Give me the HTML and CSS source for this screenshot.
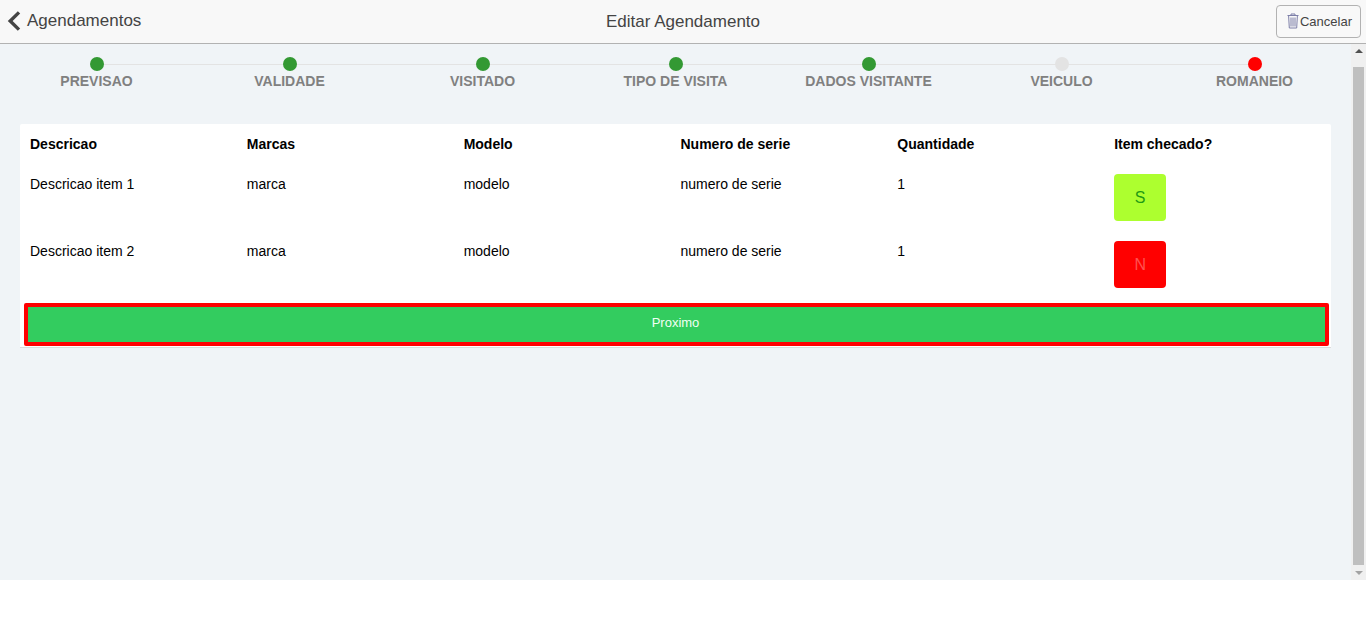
FILE: index.html
```html
<!DOCTYPE html>
<html lang="pt">
<head>
<meta charset="utf-8">
<title>Editar Agendamento</title>
<link rel="stylesheet" href="styles.css">
</head>
<body>
<div class="app">
  <header class="topbar">
    <a class="back">
      <svg class="back-icon" width="14" height="22" viewBox="0 0 14 22"><path d="M12 2.4 L3.2 11 L12 19.6" fill="none" stroke="#444" stroke-width="3.4"/></svg>
      <span>Agendamentos</span>
    </a>
    <div class="title">Editar Agendamento</div>
    <button class="cancel">
      <svg class="trash" width="14" height="16" viewBox="0 0 14 16"><path d="M1.5 2.5H12.5M5 2.5V1H9V2.5M2.6 2.5L3.3 15H10.7L11.4 2.5M5 4.5V13.5M7 4.5V13.5M9 4.5V13.5" fill="none" stroke="#7d7fa8" stroke-width="1"/></svg>
      <span>Cancelar</span>
    </button>
  </header>
  <div class="body">
    <main class="content">
      <ol class="steps">
        <li class="step done"><i class="dot"></i><span>PREVISAO</span></li>
        <li class="step done"><i class="dot"></i><span>VALIDADE</span></li>
        <li class="step done"><i class="dot"></i><span>VISITADO</span></li>
        <li class="step done"><i class="dot"></i><span>TIPO DE VISITA</span></li>
        <li class="step done"><i class="dot"></i><span>DADOS VISITANTE</span></li>
        <li class="step"><i class="dot"></i><span>VEICULO</span></li>
        <li class="step active"><i class="dot"></i><span>ROMANEIO</span></li>
      </ol>
      <section class="card">
        <div class="row head">
          <div>Descricao</div><div>Marcas</div><div>Modelo</div><div>Numero de serie</div><div>Quantidade</div><div>Item checado?</div>
        </div>
        <div class="row item">
          <div>Descricao item 1</div><div>marca</div><div>modelo</div><div>numero de serie</div><div>1</div>
          <div><button class="check yes">S</button></div>
        </div>
        <div class="row item">
          <div>Descricao item 2</div><div>marca</div><div>modelo</div><div>numero de serie</div><div>1</div>
          <div><button class="check no">N</button></div>
        </div>
        <button class="next">Proximo</button>
      </section>
    </main>
    <div class="scrollbar">
      <div class="arrow up"></div>
      <div class="thumb"></div>
      <div class="arrow down"></div>
    </div>
  </div>
</div>
</body>
</html>
```
FILE: styles.css
```css
* { box-sizing: border-box; }
html, body { margin: 0; height: 100%; background: #fff; overflow: hidden; }
body { font-family: "Liberation Sans", Arial, sans-serif; color: #000; }
.app { height: 580px; display: flex; flex-direction: column; }
.topbar {
  height: 44px; flex: none; background: #f8f8f8; border-bottom: 1px solid #b2b2b2;
  position: relative; display: flex; align-items: center; justify-content: space-between;
  padding: 0 5px 1px 7px; color: #444;
}
.back { display: flex; align-items: center; gap: 6px; font-size: 17px; }
.title { position: absolute; left: 0; right: 0; text-align: center; font-size: 17px; top: 12px; pointer-events: none; }
.cancel {
  position: relative; width: 85px; height: 33px; border: 1px solid #b2b2b2; border-radius: 4px; background: transparent;
  display: flex; align-items: center; justify-content: center; gap: 0; padding: 0 0 0 1px;
  font: 13px "Liberation Sans", Arial, sans-serif; color: #444;
}
.trash { flex: none; }
.body { flex: 1; display: flex; min-height: 0; }
.content { flex: 1; background: #f0f4f7; min-width: 0; }
.steps { list-style: none; margin: 0; padding: 13px 0 0; display: grid; grid-template-columns: repeat(7, 1fr); }
.step { position: relative; display: flex; flex-direction: column; align-items: center; font-size: 14px; font-weight: 700; color: #808080; }
.step::before { content: ""; position: absolute; top: 7px; left: 50%; width: 100%; height: 1px; background: #e3e3e3; }
.step:last-child::before { display: none; }
.dot { position: relative; width: 14px; height: 14px; border-radius: 50%; background: #e3e3e3; margin-bottom: 1px; }
.step span { line-height: 18px; white-space: nowrap; }
.done .dot { background: #339933; }
.active .dot { background: #ff0000; }
.card { margin: 34px 20px 0; background: #fff; padding: 0 2px 0 4px; border-bottom: 1px solid #dcdcdc; border-radius: 2px 2px 0 0; height: 224px; }
.row { display: grid; grid-template-columns: repeat(6, 1fr); font-size: 14px; margin-left: 6px; margin-right: -2px; }
.head { font-weight: 700; height: 40px; align-items: start; padding-top: 12px; line-height: 16px; }
.item { height: 67px; padding-top: 12px; line-height: 16px; }
.check { width: 52px; height: 47px; border: 0; border-radius: 4px; font: 16px "Liberation Sans", Arial, sans-serif; margin-top: -2px; display: block; }
.yes { background: #adff2f; color: #1f9a14; }
.no { background: #ff0000; color: #ff5050; }
.next {
  display: block; width: 1305px; height: 43px; margin-top: 5px; background: #33cc5f; border: 4px solid #ff0000; border-radius: 2px;
  color: #f2fff4; font: 13px "Liberation Sans", Arial, sans-serif; padding: 0 2px 5px 0;
}
.scrollbar { width: 15px; flex: none; background: #f0f0f0; display: flex; flex-direction: column; align-items: center; }
.arrow { width: 15px; height: 23px; flex: none; position: relative; }
.arrow::after { content: ""; position: absolute; left: 4px; border-left: 4px solid transparent; border-right: 4px solid transparent; }
.up::after { top: 5px; border-bottom: 4px solid #505050; }
.down { height: 15px; }
.down::after { top: 6px; border-top: 4px solid #a3a3a3; }
.thumb { flex: 1; width: 11px; background: #bfbfbf; }
```
